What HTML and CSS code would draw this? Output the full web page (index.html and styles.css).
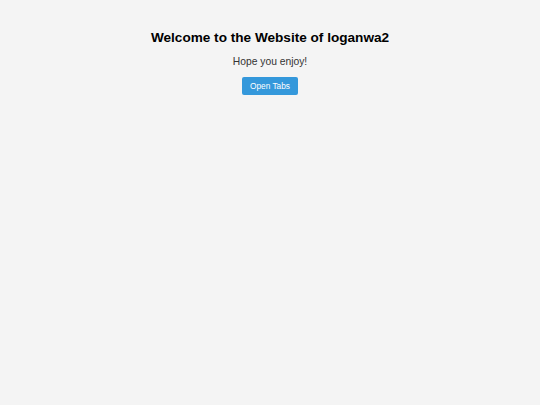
FILE: index.html
```html
<!DOCTYPE html>
<html>
<head>
<meta charset="utf-8">
<link rel="stylesheet" href="styles.css">
</head>
<body>
<main class="welcome">
  <h1 class="title">Welcome to the Website of loganwa2</h1>
  <p class="tagline">Hope you enjoy!</p>
  <button class="open-btn">Open Tabs</button>
</main>
</body>
</html>
```
FILE: styles.css
```css
html, body {
  margin: 0;
  padding: 0;
  background: #f4f4f4;
  font-family: "Liberation Sans", Arial, sans-serif;
}
.welcome {
  display: flex;
  flex-direction: column;
  align-items: center;
  padding-top: 30px;
}
.title {
  margin: 0;
  font-size: 13.6px;
  font-weight: bold;
  color: #000;
  line-height: 16px;
}
.tagline {
  margin: 9px 0 0 0;
  font-size: 10.3px;
  color: #333;
  line-height: 13px;
}
.open-btn {
  margin-top: 9px;
  background: #3498db;
  color: #fff;
  border: none;
  border-radius: 2px;
  font-family: "Liberation Sans", Arial, sans-serif;
  font-size: 8.3px;
  padding: 0 8px;
  width: 56px;
  height: 18px;
  line-height: 18px;
}
```
